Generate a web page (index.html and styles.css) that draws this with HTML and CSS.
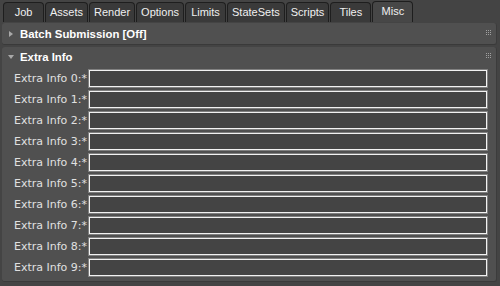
FILE: index.html
```html
<!DOCTYPE html>
<html>
<head>
<meta charset="utf-8">
<link rel="stylesheet" href="styles.css">
</head>
<body>
<div class="app">
  <div class="tabs">
    <div class="tab">Job</div>
    <div class="tab">Assets</div>
    <div class="tab">Render</div>
    <div class="tab">Options</div>
    <div class="tab">Limits</div>
    <div class="tab">StateSets</div>
    <div class="tab">Scripts</div>
    <div class="tab">Tiles</div>
    <div class="tab active">Misc</div>
  </div>
  <div class="rollout closed">
    <div class="head">
      <span class="arrow right"></span>
      <span class="title">Batch Submission [Off]</span>
      <svg class="grip" width="5" height="5" viewBox="0 0 5 5"><g fill="#a0a0a0"><rect x="0" y="0" width="1" height="1"/><rect x="2" y="0" width="1" height="1"/><rect x="4" y="0" width="1" height="1"/><rect x="0" y="2" width="1" height="1"/><rect x="2" y="2" width="1" height="1"/><rect x="4" y="2" width="1" height="1"/><rect x="0" y="4" width="1" height="1"/><rect x="2" y="4" width="1" height="1"/><rect x="4" y="4" width="1" height="1"/></g></svg>
    </div>
  </div>
  <div class="rollout open">
    <div class="head">
      <span class="arrow down"></span>
      <span class="title">Extra Info</span>
      <svg class="grip" width="5" height="5" viewBox="0 0 5 5"><g fill="#a0a0a0"><rect x="0" y="0" width="1" height="1"/><rect x="2" y="0" width="1" height="1"/><rect x="4" y="0" width="1" height="1"/><rect x="0" y="2" width="1" height="1"/><rect x="2" y="2" width="1" height="1"/><rect x="4" y="2" width="1" height="1"/><rect x="0" y="4" width="1" height="1"/><rect x="2" y="4" width="1" height="1"/><rect x="4" y="4" width="1" height="1"/></g></svg>
    </div>
    <div class="body">
      <div class="row"><label>Extra Info 0:*</label><div class="input"></div></div>
      <div class="row"><label>Extra Info 1:*</label><div class="input"></div></div>
      <div class="row"><label>Extra Info 2:*</label><div class="input"></div></div>
      <div class="row"><label>Extra Info 3:*</label><div class="input"></div></div>
      <div class="row"><label>Extra Info 4:*</label><div class="input"></div></div>
      <div class="row"><label>Extra Info 5:*</label><div class="input"></div></div>
      <div class="row"><label>Extra Info 6:*</label><div class="input"></div></div>
      <div class="row"><label>Extra Info 7:*</label><div class="input"></div></div>
      <div class="row"><label>Extra Info 8:*</label><div class="input"></div></div>
      <div class="row"><label>Extra Info 9:*</label><div class="input"></div></div>
    </div>
  </div>
</div>
</body>
</html>
```
FILE: styles.css
```css
* { box-sizing: border-box; }
html, body { margin: 0; padding: 0; }
body {
  width: 500px;
  height: 286px;
  background: #444444;
  font-family: "DejaVu Sans", sans-serif;
  color: #e6e6e6;
  overflow: hidden;
}
.app {
  padding: 0 3px 0 2px;
}
.tabs {
  display: flex;
  padding-left: 1px;
  height: 22px;
  align-items: flex-end;
}
.tab {
  height: 20px;
  min-width: 41px;
  padding: 0 4px;
  margin-right: 1px;
  border: 1px solid #1e1e1e;
  border-bottom: none;
  border-radius: 4px 4px 0 0;
  background: #3a3a3a;
  font-family: "Liberation Sans", Arial, sans-serif;
  font-size: 11px;
  line-height: 18px;
  color: #f0f0f0;
  text-align: center;
}
.tab.active {
  height: 21px;
  background: #474747;
}
.rollout {
  margin-top: 1px;
  background: #505050;
  border-radius: 3px;
  border-bottom: 1px solid #3a3a3a;
  border-right: 1px solid #3c3c3c;
}
.rollout.open { margin-top: 2px; }
.head {
  height: 20px;
  display: flex;
  align-items: center;
  padding-left: 6px;
  padding-right: 5px;
}
.closed .head { height: 21px; }
.arrow {
  width: 0; height: 0;
  margin-right: 7px;
}
.arrow.right {
  border-top: 3px solid transparent;
  border-bottom: 3px solid transparent;
  border-left: 4px solid #a8a8a8;
  margin-left: 1px;
}
.arrow.down {
  border-left: 3px solid transparent;
  border-right: 3px solid transparent;
  border-top: 4px solid #a8a8a8;
  margin-left: 0;
  margin-right: 6px;
}
.title {
  flex: 1;
  font-family: "Liberation Sans", Arial, sans-serif;
  font-weight: bold;
  font-size: 11.4px;
  color: #ffffff;
}
.grip {
  display: block;
  margin-top: -3px;
}
.body {
  padding: 1px 0 3px 12px;
}
.row {
  display: flex;
  align-items: center;
  height: 21px;
}
label {
  width: 75px;
  font-size: 11px;
  color: #e0e0e0;
}
.input {
  width: 398px;
  height: 17px;
  background: #444444;
  border: 1px solid #f2f2f2;
  outline: 1px solid #808080;
}
```
